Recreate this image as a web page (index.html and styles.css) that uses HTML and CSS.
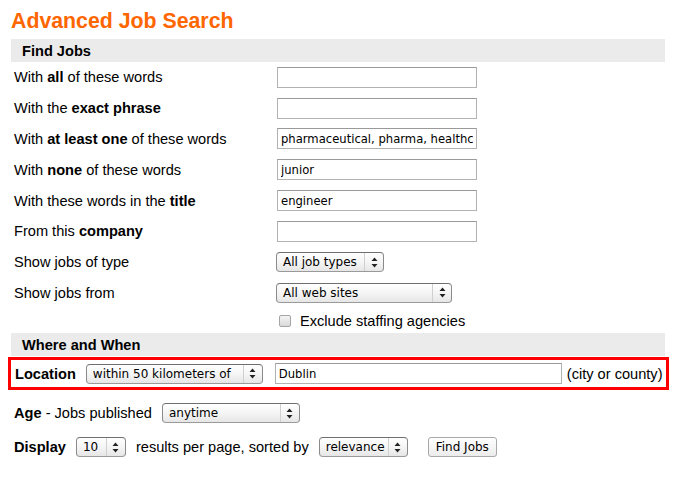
FILE: index.html
```html
<!DOCTYPE html>
<html lang="en">
<head>
<meta charset="UTF-8">
<title>Advanced Job Search</title>
<link rel="stylesheet" href="styles.css">
</head>
<body>

<div class="page">

<h1 class="title">Advanced Job Search</h1>

<div class="bar">Find Jobs</div>

<div class="rows">
  <div class="row">
    <span class="lbl">With <b>all</b> of these words</span>
    <input class="text" type="text" value="">
  </div>
  <div class="row">
    <span class="lbl">With the <b>exact phrase</b></span>
    <input class="text" type="text" value="">
  </div>
  <div class="row">
    <span class="lbl">With <b>at least one</b> of these words</span>
    <input class="text" type="text" value="pharmaceutical, pharma, healthcare">
  </div>
  <div class="row">
    <span class="lbl">With <b>none</b> of these words</span>
    <input class="text" type="text" value="junior">
  </div>
  <div class="row">
    <span class="lbl">With these words in the <b>title</b></span>
    <input class="text" type="text" value="engineer">
  </div>
  <div class="row">
    <span class="lbl">From this <b>company</b></span>
    <input class="text" type="text" value="">
  </div>
  <div class="row">
    <span class="lbl">Show jobs of type</span>
    <div class="select sel-type">
      <span class="val">All job types</span>
      <span class="arrows"><svg width="7" height="11" viewBox="0 0 7 11"><path d="M3.5 0.5 L6.5 4 L0.5 4 Z M3.5 10.5 L6.5 7 L0.5 7 Z" fill="#222"/></svg></span>
    </div>
  </div>
  <div class="row">
    <span class="lbl">Show jobs from</span>
    <div class="select sel-from">
      <span class="val">All web sites</span>
      <span class="arrows"><svg width="7" height="11" viewBox="0 0 7 11"><path d="M3.5 0.5 L6.5 4 L0.5 4 Z M3.5 10.5 L6.5 7 L0.5 7 Z" fill="#222"/></svg></span>
    </div>
  </div>
  <div class="row row-check">
    <span class="lbl"></span>
    <label class="check"><span class="box"></span>Exclude staffing agencies</label>
  </div>
</div>

<div class="bar">Where and When</div>

<div class="location">
  <b class="loc-lbl">Location</b>
  <div class="select sel-dist">
    <span class="val">within 50 kilometers of</span>
    <span class="arrows"><svg width="7" height="11" viewBox="0 0 7 11"><path d="M3.5 0.5 L6.5 4 L0.5 4 Z M3.5 10.5 L6.5 7 L0.5 7 Z" fill="#222"/></svg></span>
  </div>
  <input class="text city" type="text" value="Dublin">
  <span>(city or county)</span>
</div>

<div class="opt opt-first">
  <span><b>Age</b> - Jobs published</span>
  <div class="select sel-age">
    <span class="val">anytime</span>
    <span class="arrows"><svg width="7" height="11" viewBox="0 0 7 11"><path d="M3.5 0.5 L6.5 4 L0.5 4 Z M3.5 10.5 L6.5 7 L0.5 7 Z" fill="#222"/></svg></span>
  </div>
</div>

<div class="opt">
  <b>Display</b>
  <div class="select sel-num">
    <span class="val">10</span>
    <span class="arrows"><svg width="7" height="11" viewBox="0 0 7 11"><path d="M3.5 0.5 L6.5 4 L0.5 4 Z M3.5 10.5 L6.5 7 L0.5 7 Z" fill="#222"/></svg></span>
  </div>
  <span>results per page, sorted by</span>
  <div class="select sel-sort">
    <span class="val">relevance</span>
    <span class="arrows"><svg width="7" height="11" viewBox="0 0 7 11"><path d="M3.5 0.5 L6.5 4 L0.5 4 Z M3.5 10.5 L6.5 7 L0.5 7 Z" fill="#222"/></svg></span>
  </div>
  <button class="btn">Find Jobs</button>
</div>

</div>

</body>
</html>
```

FILE: styles.css
```css
body {
    margin: 0;
    background: #fff;
    color: #000;
    font-family: "Liberation Sans", Arial, Helvetica, sans-serif;
    font-size: 14.6px;
}

.page {
    width: 654px;
    padding: 7px 0 0 11px;
}

.title {
    margin: 0 0 4px 0;
    font-size: 21.3px;
    line-height: 28px;
    font-weight: bold;
    color: #ff6600;
}

.bar {
    background: #ebebeb;
    height: 23px;
    line-height: 24px;
    padding-left: 11px;
    font-weight: bold;
}

.row {
    display: grid;
    grid-template-columns: 263px 1fr;
    align-items: center;
    height: 30.8px;
    padding-left: 3px;
}

.row-check {
    height: 25px;
}

.text {
    box-sizing: border-box;
    width: 200px;
    height: 21px;
    margin: 0;
    padding: 0 3px;
    border: 1px solid #b2b2b2;
    border-top-color: #9a9a9a;
    border-radius: 0;
    background: #fff;
    font-family: "DejaVu Sans", Verdana, sans-serif;
    font-size: 11.6px;
    color: #000;
    outline: none;
}

.select {
    box-sizing: border-box;
    display: inline-flex;
    align-items: center;
    height: 20px;
    margin-left: -1px;
    border: 1px solid #8a8a8a;
    border-top-color: #6f6f6f;
    border-bottom-color: #9a9a9a;
    border-radius: 4px;
    background: linear-gradient(#ffffff, #f5f5f5 50%, #e6e6e6);
    font-family: "DejaVu Sans", Verdana, sans-serif;
    font-size: 12px;
}

.select .val {
    flex: 1;
    padding-left: 6px;
    white-space: nowrap;
    overflow: hidden;
}

.select .arrows {
    display: flex;
    align-items: center;
    justify-content: center;
    width: 18px;
    height: 100%;
    border-left: 1px solid #d0d0d0;
}

.sel-type { width: 108px; }
.sel-from { width: 176px; }
.sel-dist { width: 177px; margin-left: 0; }
.sel-age { width: 138px; margin-left: 0; }
.sel-num { width: 50px; margin-left: 0; }
.sel-sort { width: 89px; margin-left: 0; }

.check {
    display: flex;
    align-items: center;
    gap: 9px;
    margin-left: 2px;
}

.check .box {
    box-sizing: border-box;
    width: 12px;
    height: 12px;
    border: 1px solid #a5a5a5;
    border-radius: 2px;
    background: linear-gradient(#f4f4f4, #d9d9d9);
}

.location {
    display: flex;
    align-items: center;
    height: 27px;
    margin: 1px -4px 0 -3px;
    padding-left: 4px;
    border: 3px solid #ff0000;
}

.loc-lbl {
    margin-right: 10px;
}

.city {
    width: 287px;
    margin: 0 5px 0 12px;
}

.opt {
    display: flex;
    align-items: center;
    gap: 10px;
    height: 34px;
    padding-left: 3px;
}

.opt-first {
    margin-top: 6px;
}

.btn {
    height: 20px;
    margin-left: 10px;
    padding: 0 7px;
    border: 1px solid #a8a8a8;
    border-radius: 3px;
    background: linear-gradient(#ffffff, #ececec);
    font-family: "DejaVu Sans", Verdana, sans-serif;
    font-size: 12px;
    color: #000;
}
```
